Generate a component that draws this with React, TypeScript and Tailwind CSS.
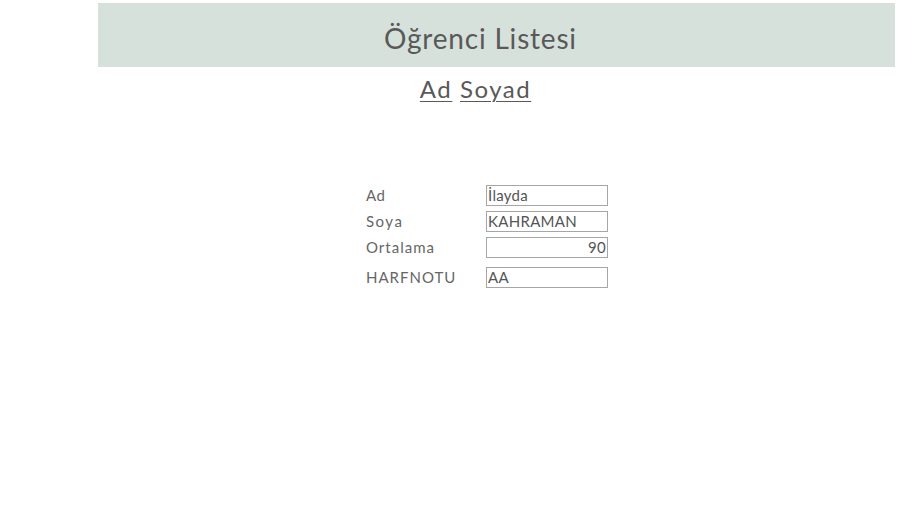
export default function App() {
  const rows = [
    { label: "Ad", value: "İlayda", align: "text-left", tracking: "tracking-[0.5px]" },
    { label: "Soya", value: "KAHRAMAN", align: "text-left", tracking: "tracking-[1.5px]" },
    { label: "Ortalama", value: "90", align: "text-right", tracking: "tracking-[1px]" },
    { label: "HARFNOTU", value: "AA", align: "text-left", tracking: "tracking-[1px]" },
  ];

  return (
    <div className="min-h-[530px] w-[919px] bg-white font-['Lato','Liberation_Sans',sans-serif] text-[#595959]">
      <div className="ml-[98px] w-[797px] pt-[3px]">
        <div className="flex h-[64px] items-center justify-center bg-[#d7e1dc] pr-[32px] pt-[6px]">
          <h1 className="text-[28px] leading-none tracking-[0.8px]">Öğrenci Listesi</h1>
        </div>
        <div className="flex justify-center pr-[42px] pt-[7px]">
          <span className="text-[24px] leading-[30px] tracking-[1.5px]">
            <span className="underline underline-offset-[3px] decoration-1">Ad</span>{" "}
            <span className="underline underline-offset-[3px] decoration-1">Soyad</span>
          </span>
        </div>
      </div>

      <div className="ml-[366px] mt-[81px] flex flex-col">
        {rows.map((row, i) => (
          <div
            key={row.label}
            className={`flex h-[21px] items-center ${i === 3 ? "mt-[9px]" : i > 0 ? "mt-[5px]" : ""}`}
          >
            <span className={`w-[120px] text-[15px] leading-[21px] text-[#666] ${row.tracking}`}>
              {row.label}
            </span>
            <div
              className={`h-[21px] w-[122px] border border-[#a6a6a6] px-[1px] text-[15px] leading-[19px] tracking-[0.3px] text-[#555] ${row.align}`}
            >
              {row.value}
            </div>
          </div>
        ))}
      </div>
    </div>
  );
}
